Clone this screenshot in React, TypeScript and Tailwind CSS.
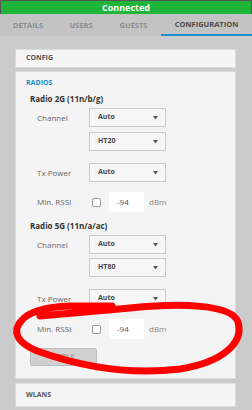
const font = { fontFamily: '"Open Sans", "Liberation Sans", sans-serif' }

function Select({ value }: { value: string }) {
  return (
    <div className="flex h-[19px] w-[77px] items-center justify-between border border-[#c9c9c9] bg-[#f7f7f7] pl-[8px] pr-[7px]">
      <span className="text-[7px] font-bold text-[#444]">{value}</span>
      <svg width="5" height="4" viewBox="0 0 5 4">
        <path d="M0 0 L5 0 L2.5 3.5 Z" fill="#555" />
      </svg>
    </div>
  )
}

function Row({ label, children, className = '' }: { label?: string; children: React.ReactNode; className?: string }) {
  return (
    <div className={`flex items-start pl-[21px] ${className}`}>
      <span className="h-[19px] w-[52px] text-[8px] leading-[19px] text-[#666]">{label}</span>
      <div className="flex flex-col">{children}</div>
    </div>
  )
}

function Rssi({ className = '' }: { className?: string }) {
  return (
    <div className={`flex h-[20px] items-center pl-[21px] ${className}`}>
      <span className="w-[55px] text-[8px] text-[#666]">Min. RSSI</span>
      <span className="h-[9px] w-[9px] rounded-[2px] border border-[#999] bg-white" />
      <span className="ml-[8px] flex h-[20px] w-[35px] items-center bg-white pl-[8px] text-[8px] text-[#555]">-94</span>
      <span className="ml-[5px] text-[8px] text-[#888]">dBm</span>
    </div>
  )
}

function Radio({ title, width, first }: { title: string; width: string; first?: boolean }) {
  return (
    <>
      <div className={`h-[12px] pl-[14px] text-[8px] font-bold leading-[12px] text-[#333] ${first ? 'mt-[4px]' : 'mt-[8px]'}`}>{title}</div>
      <Row label="Channel" className="mt-[3px]">
        <Select value="Auto" />
        <div className={first ? 'mt-[5px]' : 'mt-[4px]'}>
          <Select value={width} />
        </div>
      </Row>
      <Row label="Tx Power" className="mt-[12px]">
        <Select value="Auto" />
      </Row>
    </>
  )
}

export default function App() {
  return (
    <div className="relative h-[410px] w-[252px] overflow-hidden bg-[#cbcbcb]" style={font}>
      <div className="bg-[#555] px-[1px] pt-[1px]">
        <div className="flex h-[13px] items-center justify-center bg-[#1fb53b] text-[9px] font-bold text-white">
          Connected
        </div>
      </div>
      <div className="flex h-[22px] bg-[#c3c3c3] text-[7.5px] font-bold">
        <div className="flex w-[56px] items-center justify-center pt-[1px] text-[#8c8c8c]">DETAILS</div>
        <div className="flex w-[50px] items-center justify-center pt-[1px] text-[#8c8c8c]">USERS</div>
        <div className="flex w-[55px] items-center justify-center pt-[1px] text-[#8c8c8c]">GUESTS</div>
        <div className="flex flex-1 items-center justify-center border-b-[2px] border-[#1b8fd0] pt-[1px] text-[#4a4a4a]">
          CONFIGURATION
        </div>
      </div>

      <div className="flex w-[236px] flex-col gap-[3px] pl-[15px] pt-[13px]">
        <div className="flex h-[19px] items-center border border-[#dcdcdc] bg-[#f5f5f5] pl-[10px] text-[7px] font-bold text-[#555]">
          CONFIG
        </div>

        <div className="flex flex-col border border-[#dcdcdc] bg-[#f4f4f4] pb-[12px] pt-[5px]">
          <div className="h-[12px] pl-[10px] text-[7px] font-bold leading-[12px] text-[#1d8dd0]">RADIOS</div>
          <Radio title="Radio 2G (11n/b/g)" width="HT20" first />
          <Rssi className="mt-[10px]" />
          <Radio title="Radio 5G (11n/a/ac)" width="HT80" />
          <Rssi className="mt-[11px]" />
          <div className="ml-[14px] mt-[9px] flex h-[18px] w-[67px] items-center justify-center rounded-[2px] border border-[#bdbdbd] bg-[#d0d0d0] text-[7px] font-bold text-[#999]">
            APPLY
          </div>
        </div>

        <div className="mt-[1px] flex h-[24px] items-center border border-[#dcdcdc] bg-[#f5f5f5] pl-[10px] text-[7px] font-bold text-[#555]">
          WLANS
        </div>
        <div className="h-[20px] border border-[#dcdcdc] bg-[#f5f5f5]" />
      </div>

      <svg className="pointer-events-none absolute inset-0" width="252" height="410" viewBox="0 0 252 410">
        <path
          d="M40 316 C70 313 100 311 130 308 C180 303 232 304 238 322 C244 342 224 362 180 369 C130 375 80 366 40 352 C15 343 12 330 22 320 C30 311 45 307 70 306 L112 306"
          fill="none"
          stroke="#ff0000"
          strokeWidth="7"
          strokeLinecap="round"
          strokeLinejoin="round"
        />
      </svg>
    </div>
  )
}
